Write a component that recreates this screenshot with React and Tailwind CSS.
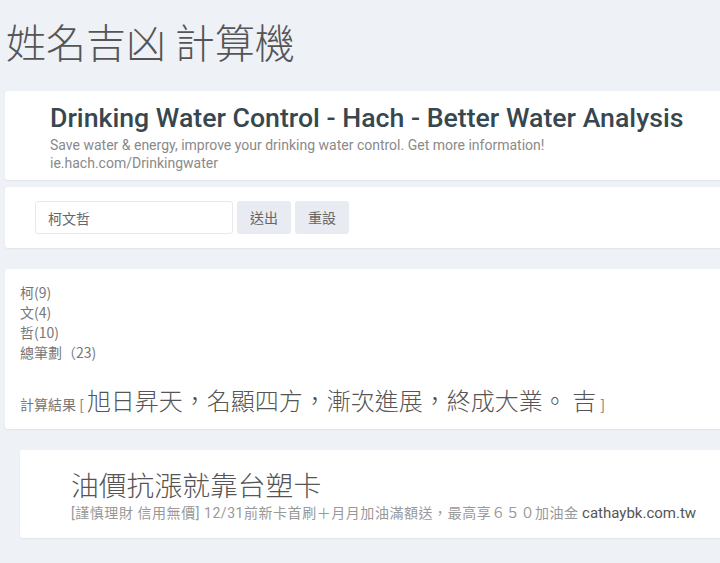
import React from 'react';

const cjk = { fontFamily: '"Noto Sans CJK TC", "Liberation Sans", sans-serif' };
const roboto = { fontFamily: 'Roboto, "Noto Sans CJK TC", "Liberation Sans", sans-serif' };

function AdTop() {
  return (
    <div className="w-[760px] ml-[5px] bg-white rounded-[3px] shadow-[0_1px_2px_rgba(0,0,0,0.06)] pl-[45px] pt-[9px] pb-[8px]">
      <div className="text-[26.7px] leading-[36px] font-medium text-[#37474f]" style={roboto}>
        Drinking Water Control - Hach - Better Water Analysis
      </div>
      <div className="text-[14px] leading-[18px] text-[#8a8a8a]" style={roboto}>
        <div>Save water &amp; energy, improve your drinking water control. Get more information!</div>
        <div>ie.hach.com/Drinkingwater</div>
      </div>
    </div>
  );
}

function NameForm() {
  const [name, setName] = React.useState('柯文哲');
  return (
    <div className="w-[760px] ml-[5px] mt-[7px] bg-white rounded-[3px] shadow-[0_1px_2px_rgba(0,0,0,0.06)] pl-[30px] py-[14px] flex gap-[4px]" style={cjk}>
      <input
        value={name}
        onChange={(e) => setName(e.target.value)}
        className="w-[198px] h-[33px] border border-[#e6e8ec] rounded-[3px] px-[12px] text-[14px] text-[#666] outline-none"
        style={cjk}
      />
      <button className="w-[54px] h-[33px] bg-[#e8ebf1] rounded-[3px] text-[14px] text-[#666]">送出</button>
      <button className="w-[54px] h-[33px] bg-[#e8ebf1] rounded-[3px] text-[14px] text-[#666]">重設</button>
    </div>
  );
}

function Result() {
  const strokes = [
    ['柯', 9],
    ['文', 4],
    ['哲', 10],
  ];
  return (
    <div className="w-[760px] ml-[5px] mt-[21px] bg-white rounded-[3px] shadow-[0_1px_2px_rgba(0,0,0,0.06)] pl-[15px] pt-[13px] pb-[13px] text-[#777]" style={cjk}>
      <div className="text-[14px] leading-[20px]">
        {strokes.map(([c, n]) => (
          <div key={c}>{c}({n})</div>
        ))}
        <div>總筆劃（23)</div>
      </div>
      <div className="mt-[22px] flex items-end">
        <span className="text-[14px] leading-[20px] mb-[2px]">計算結果 [</span>
        <span className="text-[24px] leading-[32px] font-light text-[#555] ml-[3px]">旭日昇天，名顯四方，漸次進展，終成大業。 吉</span>
        <span className="text-[14px] leading-[20px] mb-[2px] ml-[4px]">]</span>
      </div>
    </div>
  );
}

function AdBottom() {
  return (
    <div className="w-[760px] ml-[20px] mt-[21px] bg-white rounded-[2px] shadow-[0_1px_2px_rgba(0,0,0,0.06)] pl-[51px] pt-[14px] pb-[15px]" style={cjk}>
      <div className="text-[27.8px] leading-[40px] font-light text-[#555]">油價抗漲就靠台塑卡</div>
      <div className="text-[14px] leading-[19px] text-[#999]" style={roboto}>
        <span className="tracking-[0.55px]">[謹慎理財 信用無價] 12/31前新卡首刷＋月月加油滿額送，最高享６５０加油金</span>{' '}
        <span className="text-[#555] text-[15px]">cathaybk.com.tw</span>
      </div>
    </div>
  );
}

export default function App() {
  return (
    <div className="w-[720px] h-[563px] overflow-hidden bg-[#eef1f5]">
      <h1 className="pl-[6px] pt-[14px] pb-[22px] text-[40px] leading-[55px] font-light text-[#555]" style={cjk}>
        姓名吉凶 計算機
      </h1>
      <AdTop />
      <NameForm />
      <Result />
      <AdBottom />
    </div>
  );
}
